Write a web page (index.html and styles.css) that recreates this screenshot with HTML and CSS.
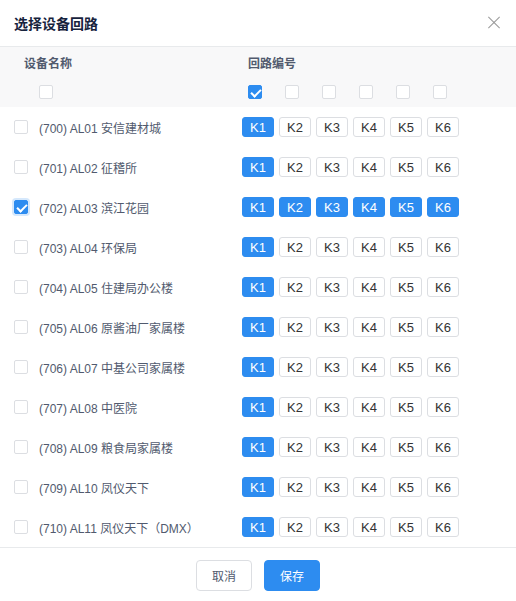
FILE: index.html
```html
<!DOCTYPE html>
<html lang="zh-CN">
<head>
<meta charset="utf-8">
<title>选择设备回路</title>
<link rel="stylesheet" href="styles.css">
</head>
<body>
<div class="modal">
  <div class="modal-header">
    <span class="modal-title">选择设备回路</span>
    <span class="close" aria-label="关闭"></span>
  </div>
  <div class="table">
    <div class="thead">
      <div class="trow th-title">
        <div class="col1"><span class="th-name">设备名称</span></div>
        <div class="col2"><span class="th-name">回路编号</span></div>
      </div>
      <div class="trow th-checks">
        <div class="col1"><span class="cb"></span></div>
        <div class="col2 checks">
          <span class="cb on"></span><span class="cb"></span><span class="cb"></span><span class="cb"></span><span class="cb"></span><span class="cb"></span>
        </div>
      </div>
    </div>
    <div class="tbody">
      <div class="trow row">
        <div class="col1"><span class="cb"></span><span class="name">(700) AL01 安信建材城</span></div>
        <div class="col2 ks"><span class="k on">K1</span><span class="k">K2</span><span class="k">K3</span><span class="k">K4</span><span class="k">K5</span><span class="k">K6</span></div>
      </div>
      <div class="trow row">
        <div class="col1"><span class="cb"></span><span class="name">(701) AL02 征稽所</span></div>
        <div class="col2 ks"><span class="k on">K1</span><span class="k">K2</span><span class="k">K3</span><span class="k">K4</span><span class="k">K5</span><span class="k">K6</span></div>
      </div>
      <div class="trow row">
        <div class="col1"><span class="cb on focus"></span><span class="name">(702) AL03 滨江花园</span></div>
        <div class="col2 ks"><span class="k on">K1</span><span class="k on">K2</span><span class="k on">K3</span><span class="k on">K4</span><span class="k on">K5</span><span class="k on">K6</span></div>
      </div>
      <div class="trow row">
        <div class="col1"><span class="cb"></span><span class="name">(703) AL04 环保局</span></div>
        <div class="col2 ks"><span class="k on">K1</span><span class="k">K2</span><span class="k">K3</span><span class="k">K4</span><span class="k">K5</span><span class="k">K6</span></div>
      </div>
      <div class="trow row">
        <div class="col1"><span class="cb"></span><span class="name">(704) AL05 住建局办公楼</span></div>
        <div class="col2 ks"><span class="k on">K1</span><span class="k">K2</span><span class="k">K3</span><span class="k">K4</span><span class="k">K5</span><span class="k">K6</span></div>
      </div>
      <div class="trow row">
        <div class="col1"><span class="cb"></span><span class="name">(705) AL06 原酱油厂家属楼</span></div>
        <div class="col2 ks"><span class="k on">K1</span><span class="k">K2</span><span class="k">K3</span><span class="k">K4</span><span class="k">K5</span><span class="k">K6</span></div>
      </div>
      <div class="trow row">
        <div class="col1"><span class="cb"></span><span class="name">(706) AL07 中基公司家属楼</span></div>
        <div class="col2 ks"><span class="k on">K1</span><span class="k">K2</span><span class="k">K3</span><span class="k">K4</span><span class="k">K5</span><span class="k">K6</span></div>
      </div>
      <div class="trow row">
        <div class="col1"><span class="cb"></span><span class="name">(707) AL08 中医院</span></div>
        <div class="col2 ks"><span class="k on">K1</span><span class="k">K2</span><span class="k">K3</span><span class="k">K4</span><span class="k">K5</span><span class="k">K6</span></div>
      </div>
      <div class="trow row">
        <div class="col1"><span class="cb"></span><span class="name">(708) AL09 粮食局家属楼</span></div>
        <div class="col2 ks"><span class="k on">K1</span><span class="k">K2</span><span class="k">K3</span><span class="k">K4</span><span class="k">K5</span><span class="k">K6</span></div>
      </div>
      <div class="trow row">
        <div class="col1"><span class="cb"></span><span class="name">(709) AL10 凤仪天下</span></div>
        <div class="col2 ks"><span class="k on">K1</span><span class="k">K2</span><span class="k">K3</span><span class="k">K4</span><span class="k">K5</span><span class="k">K6</span></div>
      </div>
      <div class="trow row">
        <div class="col1"><span class="cb"></span><span class="name">(710) AL11 凤仪天下（DMX）</span></div>
        <div class="col2 ks"><span class="k on">K1</span><span class="k">K2</span><span class="k">K3</span><span class="k">K4</span><span class="k">K5</span><span class="k">K6</span></div>
      </div>
    </div>
  </div>
  <div class="modal-footer">
    <button class="btn">取消</button>
    <button class="btn primary">保存</button>
  </div>
</div>
</body>
</html>
```
FILE: styles.css
```css
* { box-sizing: border-box; }
html, body {
  margin: 0;
  padding: 0;
  background: #fff;
}
body {
  font-family: "Liberation Sans", "Noto Sans CJK SC", sans-serif;
  font-size: 12px;
  color: #515a6e;
}
.modal {
  width: 516px;
  height: 601px;
  display: flex;
  flex-direction: column;
  background: #fff;
}
.modal-header {
  height: 47px;
  border-bottom: 1px solid #e8eaec;
  display: flex;
  align-items: center;
  justify-content: space-between;
  padding: 0 16px 1px 14px;
}
.modal-title {
  font-size: 14px;
  font-weight: bold;
  color: #17233d;
}
.close {
  position: relative;
  width: 12px;
  height: 12px;
  margin-top: 1px;
}
.close::before, .close::after {
  content: "";
  position: absolute;
  left: -2px;
  top: 5px;
  width: 16px;
  height: 1px;
  background: #999;
}
.close::before { transform: rotate(45deg); }
.close::after { transform: rotate(-45deg); }

.thead {
  background: #f8f8f9;
}
.trow {
  display: flex;
  align-items: center;
}
.col1 {
  width: 242px;
  display: flex;
  align-items: center;
}
.col2 {
  flex: 1;
  display: flex;
  align-items: center;
}
.th-title { height: 30px; padding-top: 1px; }
.th-title .col1 { padding-left: 24px; }
.th-title .col2 { padding-left: 6px; }
.th-name {
  font-weight: bold;
  color: #515a6e;
}
.th-checks { height: 30px; }
.th-checks .col1 { padding-left: 39px; }
.th-checks .col2 { padding-left: 6px; gap: 23px; }

.cb {
  width: 14px;
  height: 14px;
  border: 1px solid #dcdee2;
  border-radius: 2px;
  background: #fff;
  position: relative;
  flex: none;
}
.cb.on {
  background: #2d8cf0;
  border-color: #2d8cf0;
}
.cb.on::after {
  content: "";
  position: absolute;
  left: 4px;
  top: 1px;
  width: 4px;
  height: 8px;
  border: 2px solid #fff;
  border-top: 0;
  border-left: 0;
  transform: rotate(45deg);
}
.cb.focus {
  box-shadow: 0 0 0 2px rgba(45, 140, 240, 0.2);
}

.row { height: 40px; }
.row .col1 { padding-left: 14px; gap: 11px; }
.name { white-space: nowrap; color: #515a6e; }
.ks { gap: 5px; }
.k {
  width: 32px;
  height: 20px;
  border: 1px solid #dcdee2;
  border-radius: 3px;
  display: flex;
  align-items: center;
  justify-content: center;
  font-size: 13px;
  color: #333;
  background: #fff;
}
.k.on {
  background: #2d8cf0;
  border-color: #2d8cf0;
  color: #fff;
}

.modal-footer {
  margin-top: auto;
  border-top: 1px solid #e8eaec;
  height: 54px;
  display: flex;
  justify-content: center;
  align-items: flex-start;
  padding-top: 12px;
  gap: 12px;
}
.btn {
  font-family: inherit;
  font-size: 12px;
  height: 31px;
  width: 56px;
  border: 1px solid #dcdee2;
  border-radius: 4px;
  background: #fff;
  color: #515a6e;
  padding: 0;
}
.btn.primary {
  background: #2d8cf0;
  border-color: #2d8cf0;
  color: #fff;
}
```
